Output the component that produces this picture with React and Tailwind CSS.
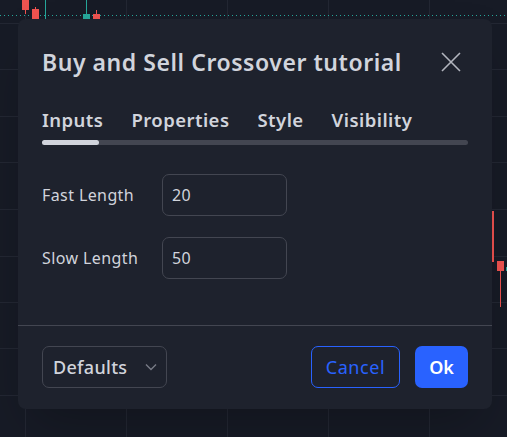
const Chart = () => (
  <svg className="absolute inset-0" width="507" height="437" viewBox="0 0 507 437">
    <rect width="507" height="437" fill="#171b26" />
    {[25, 126, 227, 328, 429].map((x) => (
      <line key={x} x1={x + 0.5} y1="0" x2={x + 0.5} y2="437" stroke="#232733" />
    ))}
    {[23, 69, 116, 162, 209, 256, 302, 348, 395].map((y) => (
      <line key={y} x1="0" y1={y + 0.5} x2="507" y2={y + 0.5} stroke="#232733" />
    ))}
    <line x1="0" y1="15.5" x2="507" y2="15.5" stroke="#26a69a" strokeDasharray="1 3" />
    <line x1="25.5" y1="0" x2="25.5" y2="14" stroke="#f05350" />
    <rect x="22" y="0" width="7" height="10" fill="#f05350" />
    <line x1="35.5" y1="7" x2="35.5" y2="19" stroke="#f05350" />
    <rect x="32" y="9" width="7" height="10" fill="#f05350" />
    <line x1="45.5" y1="0" x2="45.5" y2="19" stroke="#26a69a" />
    <line x1="86.5" y1="0" x2="86.5" y2="19" stroke="#26a69a" />
    <rect x="83" y="14" width="7" height="5" fill="#26a69a" />
    <line x1="96.5" y1="10" x2="96.5" y2="19" stroke="#f05350" />
    <rect x="93" y="14" width="7" height="5" fill="#f05350" />
    <rect x="492" y="211" width="2" height="51" fill="#f05350" />
    <line x1="500.5" y1="261" x2="500.5" y2="307" stroke="#f05350" />
    <rect x="497" y="261" width="7" height="10" fill="#f05350" />
    <rect x="506" y="267" width="2" height="4" fill="#26a69a" />
  </svg>
);

const Field = ({ label, value }) => (
  <div className="flex items-center">
    <div className="w-[120px] text-[16px] tracking-[0.4px] text-[#d1d4dc]">{label}</div>
    <div className="flex h-[42px] w-[125px] items-center rounded-[7px] border border-[#434651] px-[9px] text-[16px] tracking-[0.3px] text-[#d1d4dc]">
      {value}
    </div>
  </div>
);

export default function App() {
  const tabs = ["Inputs", "Properties", "Style", "Visibility"];

  return (
    <div
      className="relative h-[437px] w-[507px] overflow-hidden"
      style={{ fontFamily: '"Noto Sans", "Open Sans", sans-serif' }}
    >
      <Chart />

      {/* dialog */}
      <div className="absolute left-[18px] top-[19px] flex h-[390px] w-[474px] flex-col rounded-[8px] bg-[#1e222d] shadow-2xl">
        <div className="px-[24px] pt-[26px]">
          <div className="flex h-[34px] items-center justify-between">
            <h2 className="text-[23px] font-semibold tracking-[0.55px] text-[#d1d4dc]">
              Buy and Sell Crossover tutorial
            </h2>
            <svg width="20" height="20" viewBox="0 0 20 20" className="mr-[7px]">
              <path d="M1 1l18 18M19 1L1 19" stroke="#b2b5be" strokeWidth="1.6" />
            </svg>
          </div>

          {/* tabs */}
          <div className="mt-[29px] flex h-[24px] items-center gap-[28px]">
            {tabs.map((t) => (
              <span key={t} className="text-[18.5px] font-semibold tracking-[0.45px] text-[#d1d4dc]">
                {t}
              </span>
            ))}
          </div>
          <div className="mt-[8px] h-[5px] w-full rounded-full bg-[#434651]">
            <div className="h-[5px] w-[57px] rounded-full bg-[#d1d4dc]" />
          </div>

          {/* inputs */}
          <div className="mt-[29px] flex flex-col gap-[21px]">
            <Field label="Fast Length" value="20" />
            <Field label="Slow Length" value="50" />
          </div>
        </div>

        <div className="mt-[46px] h-px bg-[#434651]" />

        {/* footer */}
        <div className="flex items-center justify-between px-[24px] pt-[20px]">
          <div className="flex h-[42px] w-[125px] items-center justify-between rounded-[7px] border border-[#434651] pl-[10px] pr-[9px]">
            <span className="text-[18px] font-medium tracking-[0.3px] text-[#d1d4dc]">Defaults</span>
            <svg width="12" height="8" viewBox="0 0 12 8">
              <path d="M1 1.5l5 5 5-5" stroke="#787b86" strokeWidth="1.4" fill="none" />
            </svg>
          </div>
          <div className="flex items-center gap-[15px]">
            <button className="h-[42px] w-[89px] rounded-[7px] border border-[#2962ff] text-[18px] tracking-[0.6px] text-[#2962ff]">
              Cancel
            </button>
            <button className="h-[42px] w-[53px] rounded-[7px] bg-[#2962ff] text-[18px] font-semibold text-white">
              Ok
            </button>
          </div>
        </div>
      </div>
    </div>
  );
}
